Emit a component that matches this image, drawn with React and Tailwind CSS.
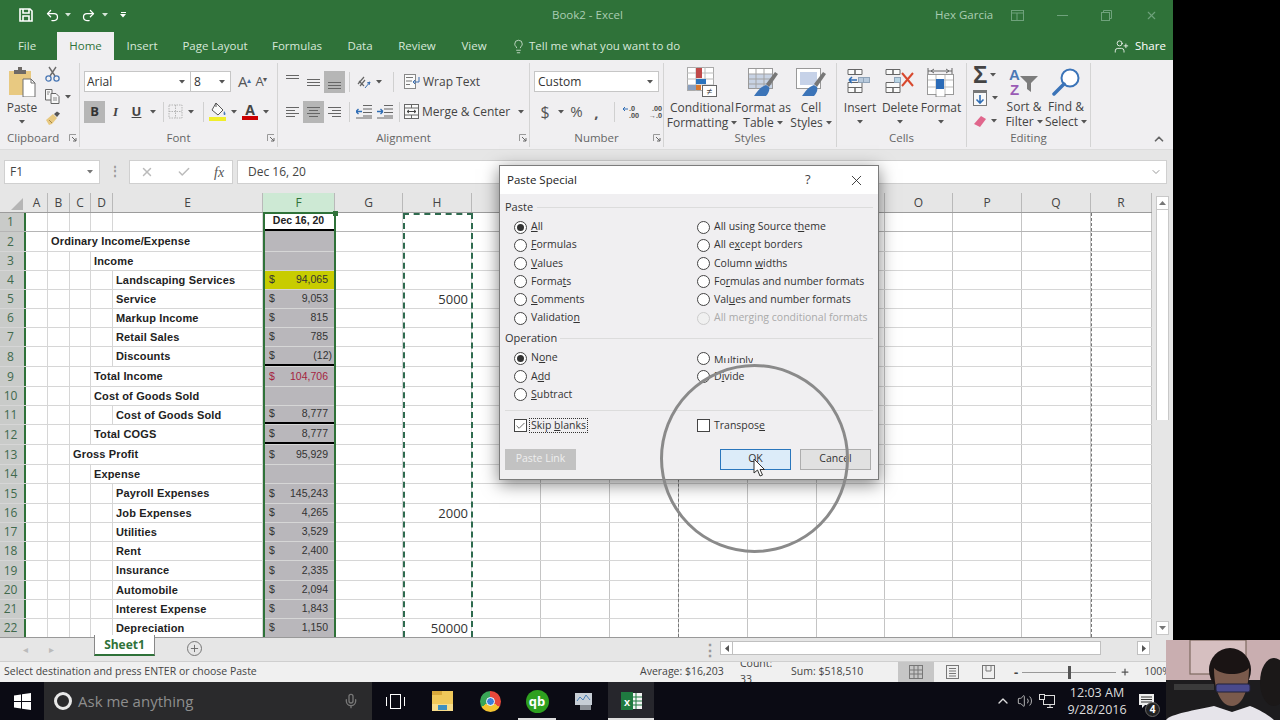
import React from "react";
import { Mic, ChevronUp, Undo2, Redo2, Lightbulb, UserPlus, X, Check, Plus, ChevronDown, Volume2 } from "lucide-react";

const Caret = ({ c = "#555" }) => (
  <svg width="6" height="4" viewBox="0 0 6 4" className="shrink-0"><polygon points="0,0 6,0 3,3.5" fill={c} /></svg>
);
const Launcher = () => (
  <svg width="8" height="8" viewBox="0 0 8 8" className="absolute right-[2px] top-[5px]"><path d="M0.5 7V0.5H7" stroke="#999" fill="none" /><path d="M3 3L7 7M7 4V7H4" stroke="#666" fill="none" /></svg>
);
const Sep = () => <div className="w-px h-[20px] bg-[#d0d0d0] shrink-0" />;

const Lines = ({ rows, c = "#666" }) => (
  <svg width="15" height="14" viewBox="0 0 15 14">
    {rows.map(([x, y, w], i) => <rect key={i} x={x} y={y} width={w} height="1" fill={c} />)}
  </svg>
);

const IconPaste = () => (
  <svg width="30" height="30" viewBox="0 0 30 30">
    <rect x="1" y="4" width="22" height="24" fill="#e8c981" />
    <rect x="6" y="3" width="12" height="4" fill="#6e6a66" /><rect x="10" y="0" width="4" height="4" fill="#6e6a66" />
    <path d="M15 12H23L27 16V30H15Z" fill="#fff" stroke="#6e6e6e" />
    <path d="M23 12V16H27" fill="none" stroke="#6e6e6e" />
  </svg>
);
const IconCut = () => (
  <svg width="15" height="16" viewBox="0 0 15 16">
    <path d="M4 1L10 10M11 1L5 10" stroke="#6b6b6b" strokeWidth="1.4" />
    <circle cx="3.5" cy="12.5" r="2.6" fill="none" stroke="#4a78b5" strokeWidth="1.3" />
    <circle cx="11.5" cy="12.5" r="2.6" fill="none" stroke="#4a78b5" strokeWidth="1.3" />
  </svg>
);
const IconCopy = () => (
  <svg width="15" height="15" viewBox="0 0 15 15" fill="#f7f7f7" stroke="#666">
    <path d="M0.5 0.5H7V11H0.5Z" /><path d="M6 4.5H11L14 7.5V14.5H6Z" />
    <path d="M2 3H5M2 5H4M8 9H12M8 11H12" stroke="#888" />
  </svg>
);
const IconBrush = () => (
  <svg width="16" height="15" viewBox="0 0 16 15">
    <path d="M9 3L12 0.5L15 2.5L12 6Z" fill="#555" />
    <path d="M8 3L12 7L7 13L4 14L1 9Z" fill="#e8c981" />
    <path d="M4 9L7 12" stroke="#a5874a" />
  </svg>
);
const IconBorders = () => (
  <svg width="15" height="15" viewBox="0 0 15 15" fill="none" stroke="#b5b5b5" strokeDasharray="1.5 1">
    <rect x="1" y="1" width="13" height="13" /><path d="M7.5 1V14M1 7.5H14" />
  </svg>
);
const IconFill = () => (
  <svg width="18" height="20" viewBox="0 0 18 20">
    <path d="M7 1L14 8L9 13L3 8Z" fill="#fafafa" stroke="#555" />
    <path d="M7 1V5" stroke="#555" /><path d="M15 9C16.5 11 17 12 16 13C15 13.5 14 12.5 15 9Z" fill="#4a78b5" />
    <rect x="0" y="15" width="17" height="4" fill="#f0ee2a" />
  </svg>
);
const IconOrient = () => (
  <svg width="16" height="16" viewBox="0 0 16 16">
    <path d="M2 10L8 3M4 12L9 6M3 7L8 12" stroke="#666" strokeWidth="1.2" /><path d="M9 14L14 8M14 8L11 9M14 8L13 11" stroke="#3c6fb0" fill="none" />
  </svg>
);
const IconWrap = () => (
  <svg width="16" height="15" viewBox="0 0 16 15" fill="none">
    <rect x="0.5" y="0.5" width="11" height="14" stroke="#888" fill="#fafafa" />
    <path d="M2 3.5H9M2 7H8M2 10.5H6" stroke="#777" /><path d="M9 8H15M15 3V8M11 6L9 8L11 10" stroke="#3c6fb0" />
  </svg>
);
const IconMerge = () => (
  <svg width="15" height="15" viewBox="0 0 15 15" fill="#fafafa">
    <rect x="0.5" y="0.5" width="14" height="14" stroke="#666" /><path d="M0.5 4H14.5M0.5 11H14.5M7.5 0.5V4M7.5 11V14.5" stroke="#666" />
    <path d="M3 7.5H12M3 7.5L5 6M3 7.5L5 9M12 7.5L10 6M12 7.5L10 9" stroke="#444" fill="none" />
  </svg>
);
const IconIndent = ({ flip }) => (
  <svg width="16" height="14" viewBox="0 0 16 14" className={flip ? "" : ""}>
    <path d="M7 1H16M7 4.5H16M7 8H16M7 11.5H16M0 13.5H16" stroke="#666" transform="translate(0 -0.5)" />
    {flip ? <path d="M0 6.5H6M6 6.5L3.5 4M6 6.5L3.5 9" stroke="#2f6db5" strokeWidth="1.3" fill="none" /> : <path d="M0 6.5H6M0 6.5L2.5 4M0 6.5L2.5 9" stroke="#2f6db5" strokeWidth="1.3" fill="none" />}
  </svg>
);
const IconCond = () => (
  <svg width="31" height="30" viewBox="0 0 31 30">
    <rect x="0.5" y="0.5" width="26" height="23" fill="#fff" stroke="#aaa" />
    <path d="M9 0V24M18 0V24M0 6H27M0 12H27M0 18H27" stroke="#bbb" />
    <rect x="9" y="1" width="6" height="5" fill="#c04a4a" /><rect x="9" y="6" width="6" height="5" fill="#c04a4a" />
    <rect x="9" y="12" width="10" height="5" fill="#2c74bd" /><rect x="9" y="18" width="5" height="5" fill="#d9772d" /><rect x="1" y="18" width="8" height="5" fill="#8aa0bf" />
    <rect x="15.5" y="18.5" width="14" height="11" fill="#fff" stroke="#666" />
    <text x="22.5" y="27.5" fontSize="10" textAnchor="middle" fill="#444" fontFamily="Liberation Sans">≠</text>
  </svg>
);
const IconTable = ({ cell }) => (
  <svg width="30" height="30" viewBox="0 0 30 30">
    <rect x="0.5" y="1.5" width="24" height="20" fill="#fff" stroke="#999" />
    {cell ? <rect x="4" y="5" width="17" height="13" fill="#c6d2e8" /> : <><rect x="1" y="7" width="23" height="14" fill="#c8d3e4" /><path d="M8 2V22M16 2V22M1 7H24M1 12H24M1 17H24" stroke="#a3a3a3" /></>}
    <path d="M18 17L27 5L30 7L21 20Z" fill="#777" />
    <path d="M18 18C12 20 9 25 6 29H18C21 26 22 22 21 20Z" fill="#3b74b8" />
  </svg>
);
const IconInsert = () => (
  <svg width="26" height="30" viewBox="0 0 26 30" fill="#fafafa" stroke="#666">
    <path d="M1 2.5H8V7.5H1ZM8 2.5H15V7.5H8Z" /><path d="M1 20.5H8V25.5H1ZM8 20.5H15V25.5H8ZM1 15.5H15V20.5H1Z" />
    <rect x="11.5" y="10.5" width="5" height="5" fill="#b7c9dc" stroke="#8fa3b8" /><rect x="16.5" y="10.5" width="6" height="5" fill="#b7c9dc" stroke="#8fa3b8" />
    <path d="M2 13H10M2 13L5 10M2 13L5 16" stroke="#2f6db5" strokeWidth="1.5" fill="none" />
  </svg>
);
const IconDelete = () => (
  <svg width="30" height="30" viewBox="0 0 30 30" fill="#fafafa" stroke="#666">
    <path d="M1 2.5H8V7.5H1ZM8 2.5H15V7.5H8Z" /><path d="M1 20.5H8V25.5H1ZM8 20.5H15V25.5H8ZM1 15.5H15V20.5H1Z" />
    <rect x="9.5" y="10.5" width="6" height="5" fill="#b7d4e4" stroke="#8fa3b8" />
    <path d="M17 6L28 19M28 6L17 19" stroke="#d8492f" strokeWidth="2" />
  </svg>
);
const IconFormat = () => (
  <svg width="28" height="30" viewBox="0 0 28 30">
    <path d="M1 4H25M1 1V7M25 1V7" stroke="#666" fill="none" /><path d="M4 4L7 2M4 4L7 6M22 4L19 2M22 4L19 6" stroke="#666" fill="none" />
    <rect x="0.5" y="7.5" width="26" height="20" fill="#fff" stroke="#999" />
    <path d="M9 8V27M18 8V27M1 13H26M1 20H26" stroke="#bbb" />
    <rect x="9" y="12" width="8" height="10" fill="#2c6cb8" />
    <path d="M9 27V30H18V27" fill="#fff" stroke="#888" />
  </svg>
);
const IconSort = () => (
  <svg width="31" height="28" viewBox="0 0 31 28">
    <text x="0" y="12" fontSize="15" fontWeight="700" fill="#4a78b5" fontFamily="Liberation Sans">A</text>
    <text x="1" y="27" fontSize="15" fontWeight="700" fill="#9a5bb5" fontFamily="Liberation Sans">Z</text>
    <path d="M11 8H29L22 15V24L18 21V15Z" fill="#7c7c7c" />
  </svg>
);
const IconFind = () => (
  <svg width="28" height="28" viewBox="0 0 28 28">
    <circle cx="18" cy="10" r="8.5" fill="#fff" stroke="#3b74b8" strokeWidth="2" />
    <path d="M12 16L2 26" stroke="#3b74b8" strokeWidth="3.5" strokeLinecap="round" />
  </svg>
);
const IconFillDown = () => (
  <svg width="15" height="16" viewBox="0 0 15 16">
    <rect x="0.5" y="0.5" width="13" height="15" fill="#f8f8f8" stroke="#777" /><rect x="0" y="0" width="14" height="3" fill="#777" />
    <path d="M7 5V13M3.5 9.5L7 13L10.5 9.5" stroke="#2f6db5" strokeWidth="1.6" fill="none" />
  </svg>
);
const IconEraser = () => (
  <svg width="14" height="13" viewBox="0 0 14 13"><path d="M8 1L13 4L7 12L1 9Z" fill="#e0668c" /></svg>
);

const Large = ({ icon, l1, l2, arrow, w }) => (
  <div className={`${w} flex flex-col items-center pt-[7px] shrink-0`}>
    <div className="h-[30px] flex items-end justify-center">{icon}</div>
    <div className="mt-[3px] leading-[15px] whitespace-nowrap">{l1}</div>
    <div className="leading-[15px] h-[15px] whitespace-nowrap flex items-center gap-[3px]">{l2}{arrow && <Caret />}</div>
  </div>
);

const Group = ({ w, label, launcher, children, labelClass = "justify-center" }) => (
  <div className={`${w} h-[90px] shrink-0 flex flex-col border-r border-[#d4d4d4] text-[12px] text-[#444] mt-[3px] !h-[84px]`}>
    <div className="h-[69px] flex -mt-[3px]">{children}</div>
    <div className={`relative h-[18px] flex items-center ${labelClass} text-[11.5px] text-[#666]`}>
      {label}{launcher && <Launcher />}
    </div>
  </div>
);

const Ribbon = () => (
  <div className="h-[90px] bg-[#f0eff1] flex shrink-0 relative border-b border-[#dcdcdc]">
    <Group w="w-[80px]" label={<span className="absolute left-[7px]">Clipboard</span>} launcher>
      <div className="w-[44px] flex flex-col items-center pt-[7px]">
        <div className="pl-[2px]"><IconPaste /></div>
        <div className="mt-[3px] leading-[15px]">Paste</div>
        <div className="h-[15px] flex items-center"><Caret /></div>
      </div>
      <div className="flex flex-col pt-[6px] pl-[1px] gap-[7px]">
        <IconCut />
        <div className="flex items-center gap-[5px]"><IconCopy /><Caret /></div>
        <IconBrush />
      </div>
    </Group>
    <Group w="w-[198px]" label="Font" launcher>
      <div className="flex flex-col pl-[4px] pt-[11px] w-full">
        <div className="flex items-center h-[21px]">
          <div className="w-[107px] h-[21px] bg-white border border-[#c6c6c6] flex items-center justify-between pl-[2px] pr-[5px] text-[#333]">Arial<Caret /></div>
          <div className="w-[40px] h-[21px] bg-white border border-l-0 border-[#c6c6c6] flex items-center justify-between pl-[3px] pr-[5px] text-[#333]">8<Caret /></div>
          <span className="ml-[7px] text-[15px] text-[#555] leading-none">A<sup className="text-[#3c6fb0] text-[8px] -ml-[1px]">▴</sup></span>
          <span className="ml-[5px] text-[13px] text-[#555] leading-none">A<sup className="text-[#555] text-[8px] -ml-[1px]">▾</sup></span>
        </div>
        <div className="flex items-center h-[21px] mt-[9px]">
          <div className="w-[21px] h-[22px] bg-[#b6b6b6] flex items-center justify-center font-bold text-[13px] text-[#333]">B</div>
          <div className="w-[21px] text-center italic font-bold text-[13px] font-['Liberation_Serif',serif] text-[#444]">I</div>
          <div className="w-[21px] text-center underline font-bold text-[13px] text-[#444]">U</div>
          <div className="w-[11px] flex justify-center"><Caret /></div>
          <div className="w-[10px] flex justify-center"><Sep /></div>
          <IconBorders />
          <div className="w-[15px] flex justify-center"><Caret /></div>
          <div className="w-[11px] flex justify-center"><Sep /></div>
          <IconFill />
          <div className="w-[13px] flex justify-center"><Caret /></div>
          <div className="w-[20px] flex flex-col items-center text-[#444]">
            <span className="text-[14px] leading-[13px] font-bold">A</span><div className="w-[16px] h-[4px] bg-[#c00]" />
          </div>
          <div className="w-[12px] flex justify-center"><Caret /></div>
        </div>
      </div>
    </Group>
    <Group w="w-[252px]" label="Alignment" launcher>
      <div className="flex flex-col pl-[4px] pt-[11px] w-full">
        <div className="flex items-center h-[21px]">
          <div className="w-[21px] flex justify-center -mt-[4px]"><Lines rows={[[1, 2, 13], [1, 5, 13]]} /></div>
          <div className="w-[21px] flex justify-center"><Lines rows={[[1, 4, 13], [1, 7, 13], [1, 10, 13]]} /></div>
          <div className="w-[21px] h-[22px] bg-[#b6b6b6] flex items-center justify-center"><Lines rows={[[1, 7, 13], [1, 10, 13], [1, 13, 13]]} /></div>
          <div className="w-[8px] flex justify-center"><Sep /></div>
          <div className="w-[21px] flex justify-center"><IconOrient /></div>
          <div className="w-[9px] flex justify-center"><Caret /></div>
          <div className="w-[21px] flex justify-center"><Sep /></div>
          <IconWrap />
          <span className="ml-[3px]">Wrap Text</span>
        </div>
        <div className="flex items-center h-[21px] mt-[9px]">
          <div className="w-[21px] flex justify-center"><Lines rows={[[1, 2, 13], [1, 5, 9], [1, 8, 13], [1, 11, 9]]} /></div>
          <div className="w-[21px] h-[22px] bg-[#b6b6b6] flex items-center justify-center"><Lines rows={[[1, 2, 13], [3, 5, 9], [1, 8, 13], [3, 11, 9]]} /></div>
          <div className="w-[21px] flex justify-center"><Lines rows={[[1, 2, 13], [5, 5, 9], [1, 8, 13], [5, 11, 9]]} /></div>
          <div className="w-[8px] flex justify-center"><Sep /></div>
          <div className="w-[21px] flex justify-center"><IconIndent /></div>
          <div className="w-[21px] flex justify-center"><IconIndent flip /></div>
          <div className="w-[9px] flex justify-center"><Sep /></div>
          <IconMerge />
          <span className="ml-[3px]">Merge &amp; Center</span>
          <div className="ml-[8px]"><Caret /></div>
        </div>
      </div>
    </Group>
    <Group w="w-[134px]" label="Number" launcher>
      <div className="flex flex-col pl-[4px] pt-[11px] w-full">
        <div className="w-[125px] h-[21px] bg-white border border-[#c6c6c6] flex items-center justify-between pl-[3px] pr-[5px] text-[#333]">Custom<Caret /></div>
        <div className="flex items-center h-[21px] mt-[9px]">
          <div className="w-[22px] text-center text-[16px] text-[#555]">$</div>
          <div className="w-[9px] flex justify-center"><Caret /></div>
          <div className="w-[21px] ml-[1px] text-center text-[15px] text-[#555]">%</div>
          <div className="w-[19px] text-center font-bold text-[15px] text-[#555] leading-[14px]">,</div>
          <div className="w-[17px] flex justify-center"><Sep /></div>
          <svg width="14" height="14" viewBox="0 0 14 14"><path d="M0 4H5M0 4L2 2M0 4L2 6" stroke="#2f6db5" fill="none" /></svg>
          <span className="-ml-[8px] w-[14px] text-[7px] leading-[7px] font-bold text-[#555]">.0<br />.00</span>
          <span className="w-[14px] ml-[5px] text-[7px] leading-[7px] font-bold text-[#555] text-right">.00<br />→.0</span>
        </div>
      </div>
    </Group>
    <Group w="w-[173px]" label="Styles">
      <Large w="w-[76px]" icon={<IconCond />} l1="Conditional" l2="Formatting" arrow />
      <Large w="w-[46px]" icon={<IconTable />} l1="Format as" l2="Table" arrow />
      <Large w="w-[50px]" icon={<IconTable cell />} l1="Cell" l2="Styles" arrow />
    </Group>
    <Group w="w-[130px]" label="Cells">
      <Large w="w-[46px]" icon={<IconInsert />} l1="Insert" l2="" arrow />
      <Large w="w-[34px]" icon={<IconDelete />} l1="Delete" l2="" arrow />
      <Large w="w-[48px]" icon={<IconFormat />} l1="Format" l2="" arrow />
    </Group>
    <Group w="w-[124px]" label="Editing">
      <div className="w-[37px] flex flex-col pt-[5px] pl-[6px] gap-[4px]">
        <div className="h-[20px] flex items-center gap-[3px]"><span className="text-[24px] leading-[20px] font-bold text-[#444] font-['Liberation_Sans',sans-serif]">Σ</span><Caret /></div>
        <div className="h-[16px] flex items-center gap-[4px] mt-[1px]"><IconFillDown /><Caret /></div>
        <div className="h-[16px] flex items-center gap-[4px] mt-[3px]"><IconEraser /><Caret /></div>
      </div>
      <Large w="w-[40px]" icon={<IconSort />} l1="Sort &" l2="Filter" arrow />
      <Large w="w-[44px]" icon={<IconFind />} l1="Find &" l2="Select" arrow />
    </Group>
    <div className="flex-1 flex items-end justify-end pr-[7px] pb-[3px]"><ChevronUp size={14} strokeWidth={3} color="#666" /></div>
  </div>
);

const FormulaBar = () => (
  <div className="h-[43px] bg-[#e6e6e6] flex items-start pt-[10px] pl-[4px] shrink-0 text-[12px] text-[#444]">
    <div className="w-[96px] h-[24px] bg-white border border-[#d0d0d0] flex items-center justify-between pl-[5px] pr-[6px]">F1<Caret c="#777" /></div>
    <div className="w-[29px] flex justify-center text-[#999] font-bold leading-[22px]">⋮</div>
    <div className="w-[104px] h-[24px] bg-white border border-[#d0d0d0] flex items-center pl-[10px] gap-[23px]">
      <X size={14} color="#bbb" strokeWidth={2.5} /><Check size={14} color="#bbb" strokeWidth={2.5} />
      <span className="italic font-['Liberation_Serif',serif] text-[14px] text-[#555]">fx</span>
    </div>
    <div className="ml-[4px] w-[930px] h-[24px] bg-white border border-[#d0d0d0] flex items-center justify-between pl-[10px] pr-[4px]">Dec 16, 20<ChevronDown size={12} color="#999" /></div>
  </div>
);

const COLS = [
  ["A", "w-[22px]"], ["B", "w-[22px]"], ["C", "w-[21px]"], ["D", "w-[22px]"], ["E", "w-[150px]"], ["F", "w-[72px]"],
  ["G", "w-[68px]"], ["H", "w-[69px]"], ["I", "w-[69px]"], ["J", "w-[69px]"], ["K", "w-[69px]"], ["L", "w-[69px]"],
  ["M", "w-[69px]"], ["N", "w-[68px]"], ["O", "w-[68px]"], ["P", "w-[69px]"], ["Q", "w-[69px]"], ["R", "w-[61px]"],
];
const LEFT = { A: "w-[22px]", B: "w-[22px]", C: "w-[21px]", D: "w-[22px]" };
const MERGE = { B: "w-[215px]", C: "w-[193px]", D: "w-[172px]", E: "w-[150px]" };

const ROWS = [
  { h: 19, date: true },
  { h: 20, s: "B", t: "Ordinary Income/Expense" },
  { h: 19, s: "D", t: "Income" },
  { h: 19, s: "E", t: "Landscaping Services", v: "94,065", y: true },
  { h: 19, s: "E", t: "Service", v: "9,053", hv: "5000" },
  { h: 19, s: "E", t: "Markup Income", v: "815" },
  { h: 19, s: "E", t: "Retail Sales", v: "785" },
  { h: 20, s: "E", t: "Discounts", v: "(12)", line: true, neg: true },
  { h: 20, s: "D", t: "Total Income", v: "104,706", red: true },
  { h: 19, s: "D", t: "Cost of Goods Sold" },
  { h: 19, s: "E", t: "Cost of Goods Sold", v: "8,777", line: true },
  { h: 20, s: "D", t: "Total COGS", v: "8,777", line: true },
  { h: 20, s: "C", t: "Gross Profit", v: "95,929" },
  { h: 19, s: "D", t: "Expense" },
  { h: 20, s: "E", t: "Payroll Expenses", v: "145,243" },
  { h: 19, s: "E", t: "Job Expenses", v: "4,265", hv: "2000" },
  { h: 19, s: "E", t: "Utilities", v: "3,529" },
  { h: 19, s: "E", t: "Rent", v: "2,400" },
  { h: 20, s: "E", t: "Insurance", v: "2,335" },
  { h: 19, s: "E", t: "Automobile", v: "2,094" },
  { h: 19, s: "E", t: "Interest Expense", v: "1,843" },
  { h: 19, s: "E", t: "Depreciation", v: "1,150", hv: "50000" },
];

const Row = ({ r, n }) => {
  const order = ["A", "B", "C", "D"];
  const start = r.s || "A";
  const before = r.s ? order.slice(0, order.indexOf(start === "E" ? "D" : start) + (start === "E" ? 1 : 0)) : order;
  const rowH = r.h === 20 ? "h-[20px]" : "h-[19px]";
  const fBg = r.date ? "bg-white" : r.y ? "bg-[#c8cc00]" : "bg-[#b9b7bb]";
  const col = r.red ? "text-[#a51f3f]" : "text-[#333]";
  return (
    <div className={`flex ${rowH} border-b ${r.date ? "border-[#b5b5b5]" : "border-[#d6d6d6]"} box-border overflow-hidden`}>
      <div className="w-[26px] shrink-0 bg-[#c9cbc9] border-r-2 border-[#2f7239] text-[#40694c] text-[12px] flex items-center justify-center pr-[3px]">{n}</div>
      {before.map((c) => <div key={c} className={`${LEFT[c]} shrink-0 border-r border-[#d6d6d6]`} />)}
      {r.s ? (
        <div className={`${MERGE[r.s]} shrink-0 border-r border-[#d6d6d6] flex items-center pl-[3px] font-['Liberation_Sans',sans-serif] font-bold text-[11px] tracking-[0.15px] text-[#222] whitespace-nowrap`}>{r.t}</div>
      ) : <div className="w-[150px] shrink-0 border-r border-[#d6d6d6]" />}
      <div className={`w-[72px] shrink-0 ${fBg} ${r.date || r.line ? "border-b-2 border-black" : ""} flex items-center justify-between pl-[6px] pr-[7px] font-['Liberation_Sans',sans-serif] text-[10.5px] ${col}`}>
        {r.date ? <span className="w-full text-center font-bold text-[10.5px] text-[#222]">Dec 16, 20</span> : r.v ? <><span>$</span><span className={r.neg ? "-mr-[4px]" : ""}>{r.v}</span></> : null}
      </div>
      <div className="w-[68px] shrink-0 border-r border-[#d6d6d6]" />
      <div className="w-[69px] shrink-0 border-r border-[#d6d6d6] text-right pr-[3px] text-[13px] text-[#333] leading-[18px]">{r.hv}</div>
      {COLS.slice(8).map(([c, w]) => <div key={c} className={`${w} shrink-0 border-r border-[#c4c4c4]`} />)}
    </div>
  );
};

const Sheet = () => (
  <div className="flex h-[445px] shrink-0 bg-white">
    <div className="w-[1152px] relative shrink-0 overflow-hidden border-b border-[#999]">
      <div className="flex h-[20px] bg-[#e6e6e6] border-b border-[#9c9c9c] text-[12px] text-[#444]">
        <div className="w-[26px] shrink-0 flex items-end justify-end pr-[3px] pb-[2px]"><svg width="12" height="12" viewBox="0 0 12 12"><polygon points="12,0 12,12 0,12" fill="#b5b5b5" /></svg></div>
        {COLS.map(([c, w]) => (
          <div key={c} className={`${w} shrink-0 flex items-center justify-center border-r border-[#b9b9b9] ${c === "F" ? "bg-[#cde9d4] text-[#2f7239]" : ""}`}>{c}</div>
        ))}
      </div>
      {ROWS.map((r, i) => <Row key={i} r={r} n={i + 1} />)}
      <div className="absolute left-[263px] top-[19px] bottom-0 w-[73px] border-2 border-b-0 border-[#2f7239]" />
      <div className="absolute left-[333px] top-[18px] w-[5px] h-[5px] bg-[#2f7239]" />
      <div className="absolute left-[403px] top-[20px] bottom-0 w-[70px] border-2 border-b-0 border-dashed border-[#2f6b4f]" />
      <div className="absolute left-[678px] top-[20px] bottom-0 w-0 border-l border-dashed border-[#777]" />
      <div className="absolute left-[1091px] top-[20px] bottom-0 w-0 border-l border-dashed border-[#777]" />
    </div>
    <div className="w-[21px] shrink-0 bg-[#e6e6e6] pl-[4px] pr-[4px] pt-[3px] flex flex-col items-stretch">
      <div className="h-[14px] bg-white border border-[#c8c8c8] flex items-center justify-center"><svg width="7" height="4" viewBox="0 0 7 4"><polygon points="0,4 7,4 3.5,0" fill="#777" /></svg></div>
      <div className="h-[210px] bg-white border-x border-[#c8c8c8]" />
      <div className="flex-1" />
      <div className="h-[14px] mb-[3px] bg-white border border-[#c8c8c8] flex items-center justify-center"><svg width="7" height="4" viewBox="0 0 7 4"><polygon points="0,0 7,0 3.5,4" fill="#777" /></svg></div>
    </div>
  </div>
);

const SheetBar = () => (
  <div className="h-[24px] bg-[#e6e6e6] flex shrink-0 border-b border-[#cfcfcf] text-[#aaa] relative">
    <div className="w-[94px] flex items-center pl-[23px] gap-[21px] text-[10px] text-[#bbb]"><span>◂</span><span>▸</span></div>
    <div className="w-[61px] h-[21px] bg-white border-x border-b-2 border-[#888] border-b-[#2f7239] -mt-[3px] flex items-center justify-center text-[12px] font-bold text-[#2f7239]">Sheet1</div>
    <div className="ml-[32px] w-[15px] h-[15px] mt-[3px] rounded-full border border-[#777] flex items-center justify-center"><Plus size={11} color="#666" /></div>
    <div className="ml-[500px] text-[#999] font-bold">⋮</div>
    <div className="absolute left-[720px] top-[3px] w-[430px] h-[14px] flex">
      <div className="w-[13px] bg-white border border-[#c0c0c0] flex items-center justify-center"><svg width="4" height="7" viewBox="0 0 4 7"><polygon points="4,0 4,7 0,3.5" fill="#555" /></svg></div>
      <div className="w-[368px] bg-white border-y border-r border-[#c0c0c0]" />
      <div className="w-[36px]" />
      <div className="w-[13px] bg-white border border-[#c0c0c0] flex items-center justify-center"><svg width="4" height="7" viewBox="0 0 4 7"><polygon points="0,0 0,7 4,3.5" fill="#555" /></svg></div>
    </div>
  </div>
);

const StatusBar = () => (
  <div className="h-[20px] bg-[#f0f0f0] flex items-center shrink-0 text-[10.5px] text-[#444] pl-[4px]">
    <span className="w-[636px]">Select destination and press ENTER or choose Paste</span>
    <span className="w-[100px]">Average: $16,203</span>
    <span className="w-[47px]">Count: 33</span>
    <span className="w-[111px] pl-[4px]">Sum: $518,510</span>
    <div className="w-[36px] h-[20px] bg-[#c6c6c6] flex items-center justify-center">
      <svg width="14" height="14" viewBox="0 0 14 14" fill="none" stroke="#777"><rect x="0.5" y="0.5" width="13" height="13" /><path d="M5 0V14M9 0V14M0 5H14M0 9H14" /></svg>
    </div>
    <div className="w-[36px] flex justify-center"><svg width="13" height="14" viewBox="0 0 13 14" fill="none" stroke="#777"><rect x="0.5" y="0.5" width="12" height="13" /><path d="M3 3.5H10M3 6H10M3 8.5H10M3 11H10" /></svg></div>
    <div className="w-[37px] flex justify-center"><svg width="13" height="14" viewBox="0 0 13 14" fill="none" stroke="#777"><rect x="0.5" y="0.5" width="12" height="13" /><path d="M4 0.5V6H9V0.5" /></svg></div>
    <span className="ml-[7px] font-bold text-[13px] leading-none">-</span>
    <div className="ml-[4px] w-[94px] h-px bg-[#999] relative"><div className="absolute left-[46px] -top-[6px] w-[3px] h-[13px] bg-[#555]" /></div>
    <Plus size={10} strokeWidth={3} color="#555" className="ml-[4px]" />
    <span className="ml-[14px]">100%</span>
  </div>
);

const Radio = ({ on, off, label, cls = "" }) => (
  <div className={`h-[18.2px] flex items-center ${cls}`}>
    <span className={`w-[13px] h-[13px] rounded-full border ${off ? "border-[#ccc] bg-[#f0f0f0]" : "border-[#444] bg-white"} flex items-center justify-center shrink-0`}>
      {on && <span className="w-[7px] h-[7px] rounded-full bg-[#333]" />}
    </span>
    <span className={`ml-[4px] whitespace-nowrap ${off ? "text-[#aaa]" : ""}`}>{label}</span>
  </div>
);

const Heading = ({ t, w }) => (
  <div className="flex items-center h-[14px] text-[11px]">
    <span className={w}>{t}</span>
    <div className="flex-1 h-px bg-[#dcdcdc]" />
  </div>
);

const Dialog = () => (
  <div className="absolute left-[499px] top-[165px] w-[380px] h-[315px] border border-[#7c7c7c] bg-[#f0eff1] text-[#333] text-[10.5px] shadow-[0_4px_16px_rgba(0,0,0,0.5)] flex flex-col font-['Open_Sans',sans-serif]">
    <div className="h-[28px] bg-white flex items-center pl-[7px] shrink-0 text-[11.5px] text-[#222]">
      <span className="flex-1">Paste Special</span>
      <span className="text-[13px] w-[43px] text-[#444]">?</span>
      <X size={17} strokeWidth={1.2} color="#222" className="mr-[13px]" />
    </div>
    <div className="flex-1 pl-[5px] pr-[5px] pt-[6px] flex flex-col">
      <Heading t="Paste" w="w-[32px]" />
      <div className="flex pl-[9px] mt-[4px]">
        <div className="w-[183px]">
          <Radio on label={<><u>A</u>ll</>} />
          <Radio label={<><u>F</u>ormulas</>} />
          <Radio label={<><u>V</u>alues</>} />
          <Radio label={<>Forma<u>t</u>s</>} />
          <Radio label={<><u>C</u>omments</>} />
          <Radio label={<>Validatio<u>n</u></>} />
        </div>
        <div>
          <Radio label={<>All using Source t<u>h</u>eme</>} />
          <Radio label={<>All e<u>x</u>cept borders</>} />
          <Radio label={<>Column <u>w</u>idths</>} />
          <Radio label={<>Fo<u>r</u>mulas and number formats</>} />
          <Radio label={<>Val<u>u</u>es and number formats</>} />
          <Radio off label="All merging conditional formats" />
        </div>
      </div>
      <div className="mt-[4px]"><Heading t="Operation" w="w-[55px]" /></div>
      <div className="flex pl-[9px] mt-[4px]">
        <div className="w-[183px]">
          <Radio on label={<>N<u>o</u>ne</>} />
          <Radio label={<>A<u>d</u>d</>} />
          <Radio label={<><u>S</u>ubtract</>} />
        </div>
        <div>
          <Radio label={<span className="block h-[9px] overflow-hidden leading-[13px]"><u>M</u>ultiply</span>} />
          <Radio label={<>D<u>i</u>vide</>} />
        </div>
      </div>
      <div className="h-px bg-[#dcdcdc] mt-[6px]" />
      <div className="flex pl-[9px] mt-[8px] h-[14px] items-center">
        <div className="w-[183px] flex items-center">
          <span className="w-[13px] h-[13px] border border-[#444] bg-white flex items-center justify-center"><Check size={12} strokeWidth={1.6} color="#333" /></span>
          <span className="ml-[2px] border border-dotted border-[#333] px-[1px] leading-[13px]">Skip <u>b</u>lanks</span>
        </div>
        <span className="w-[13px] h-[13px] border border-[#444] bg-white" />
        <span className="ml-[4px]">Transpos<u>e</u></span>
      </div>
      <div className="flex mt-[16px] items-center">
        <div className="w-[71px] h-[21px] bg-[#c2c2c2] text-[#eee] flex items-center justify-center">Paste Link</div>
        <div className="ml-[144px] w-[71px] h-[21px] bg-[#dcecf9] border border-[#2a77bd] flex items-center justify-center">OK</div>
        <div className="ml-[9px] w-[71px] h-[21px] bg-[#e1e1e1] border border-[#adadad] flex items-center justify-center">Cancel</div>
      </div>
    </div>
  </div>
);

const Webcam = () => (
  <svg width="114" height="80" viewBox="0 0 114 80" className="absolute left-[1166px] top-[640px]">
    <rect width="114" height="80" fill="#c9aeb0" />
    <rect x="24" y="0" width="56" height="34" fill="#d6bfc0" stroke="#7d6a60" strokeWidth="1.2" />
    <rect x="0" y="40" width="114" height="40" fill="#1d1c1e" />
    <rect x="8" y="44" width="40" height="6" fill="#3a3a3a" />
    <ellipse cx="108" cy="42" rx="14" ry="24" fill="#1b1818" />
    <ellipse cx="64" cy="30" rx="21" ry="22" fill="#1a1414" />
    <path d="M48 28C48 48 54 66 66 66C78 66 83 46 83 28C76 36 56 36 48 28Z" fill="#7a5a4c" />
    <rect x="50" y="44" width="34" height="8" rx="2" fill="#4a4a8c" stroke="#20203a" />
    <path d="M0 80C4 74 30 70 48 66L66 72L84 66C94 70 104 76 108 80Z" fill="#e6e4ea" />
  </svg>
);

const Taskbar = () => (
  <div className="h-[38px] w-[1280px] bg-[#0b0b14] flex items-stretch shrink-0 text-[#aaa]">
    <div className="w-[44px] flex items-center justify-center">
      <svg width="17" height="17" viewBox="0 0 17 17" fill="#fff"><path d="M0 2.5L7 1.5V8H0ZM8 1.3L17 0V8H8ZM0 9H7V15.5L0 14.5ZM8 9H17V17L8 15.7Z" /></svg>
    </div>
    <div className="w-[328px] bg-[#2a2a2c] flex items-center pl-[10px] pr-[13px] text-[15px] text-[#8e8e8e] font-['Open_Sans',sans-serif]">
      <span className="w-[18px] h-[18px] rounded-full border-[3px] border-[#e8e8e8] shrink-0" />
      <span className="ml-[6px] flex-1">Ask me anything</span>
      <Mic size={16} color="#777" />
    </div>
    <div className="w-[46px] flex items-center justify-center">
      <svg width="19" height="15" viewBox="0 0 19 15" fill="none" stroke="#fff"><rect x="4.5" y="0.5" width="10" height="14" /><path d="M0.5 3V12M18.5 3V12" /></svg>
    </div>
    <div className="w-[48px] flex items-center justify-center">
      <svg width="21" height="20" viewBox="0 0 21 20"><rect y="0" width="21" height="20" fill="#f0c85a" /><rect y="0" width="10" height="4" fill="#d9a93b" /><rect x="0" y="13" width="21" height="7" fill="#f7dc8a" /><rect x="6" y="14" width="9" height="5" fill="#3f8fc0" /></svg>
    </div>
    <div className="w-[48px] flex items-center justify-center">
      <div className="w-[21px] h-[21px] rounded-full bg-[conic-gradient(#e8483b_0deg_120deg,#f4c430_120deg_240deg,#3aa657_240deg_360deg)] flex items-center justify-center"><span className="w-[9px] h-[9px] rounded-full bg-[#3b7fd9] border border-white" /></div>
    </div>
    <div className="w-[46px] flex items-center justify-center relative">
      <div className="w-[23px] h-[23px] rounded-full bg-[#2ea01f] flex items-center justify-center text-white text-[13px] font-bold leading-none">qb</div>
      <div className="absolute bottom-0 left-[4px] right-[4px] h-[2px] bg-[#ddd]" />
    </div>
    <div className="w-[48px] flex items-center justify-center">
      <svg width="21" height="20" viewBox="0 0 21 20"><rect x="1" y="2" width="17" height="12" fill="#c7ced6" /><path d="M3 10L6 6L9 9L12 4L16 9" stroke="#4a7fb5" fill="none" /><rect x="6" y="14" width="11" height="5" fill="#8a8f96" /></svg>
    </div>
    <div className="w-[46px] bg-[#26262c] flex items-center justify-center relative">
      <svg width="21" height="18" viewBox="0 0 21 18"><rect x="9" y="1" width="12" height="16" fill="#f4f4f4" /><path d="M9 5H21M9 9H21M9 13H21M15 1V17" stroke="#1f7a40" /><rect x="0" y="0" width="12" height="18" fill="#1f7a40" /><text x="6" y="13.5" fontSize="11" fontWeight="700" textAnchor="middle" fill="#fff" fontFamily="Liberation Sans">x</text></svg>
      <div className="absolute bottom-0 left-0 right-0 h-[2px] bg-[#ddd]" />
    </div>
    <div className="w-[341px]" />
    <div className="flex items-center text-[#ddd] w-[68px] gap-[6px]">
      <ChevronUp size={16} color="#ddd" />
      <Volume2 size={16} color="#ccc" strokeWidth={1.3} />
      <svg width="16" height="15" viewBox="0 0 16 15" fill="none" stroke="#ddd"><rect x="4.5" y="1.5" width="11" height="9" /><path d="M8 13.5H14M11 11V13" /><rect x="0.5" y="0.5" width="5" height="5" fill="#0b0b14" /></svg>
    </div>
    <div className="w-[68px] flex flex-col items-center justify-center text-[12.5px] leading-[17px] text-[#ddd]">
      <span>12:03 AM</span><span>9/28/2016</span>
    </div>
    <div className="relative w-[30px] flex items-center justify-center">
      <svg width="15" height="14" viewBox="0 0 15 14" fill="#eee"><path d="M0 0H15V11H6L3 14V11H0Z" /><path d="M2 3H13M2 5.5H13M2 8H13" stroke="#333" /></svg>
      <span className="absolute left-[14px] top-[20px] w-[15px] h-[15px] rounded-full bg-[#222] border border-[#666] text-white text-[10px] font-bold flex items-center justify-center">4</span>
    </div>
  </div>
);

export default function App() {
  return (
    <div className="relative w-[1280px] h-[720px] bg-black overflow-hidden flex flex-col font-['Open_Sans',sans-serif]">
      <div className="w-[1173px] h-[682px] flex flex-col shrink-0 overflow-hidden">
        <div className="h-[30px] bg-[#2f7239] flex items-center text-[#aacdb2] text-[11.5px] shrink-0 pl-[19px] relative">
          <svg width="14" height="14" viewBox="0 0 14 14" fill="none" stroke="#fff" strokeWidth="1.6"><path d="M1 1H11L13 3V13H1Z" /><path d="M4 1V5H10V1M4 13V8H10V13" /></svg>
          <Undo2 size={15} color="#fff" strokeWidth={2} className="ml-[12px]" />
          <div className="ml-[5px]"><Caret c="#d5e5d8" /></div>
          <Redo2 size={15} color="#fff" strokeWidth={2} className="ml-[10px]" />
          <div className="ml-[6px]"><Caret c="#d5e5d8" /></div>
          <div className="ml-[12px] flex flex-col items-center gap-[1px]"><div className="w-[5px] h-px bg-white" /><Caret c="#fff" /></div>
          <span className="ml-[426px] w-[383px]">Book2 - Excel</span>
          <span className="w-[76px]">Hex Garcia</span>
          <svg width="13" height="11" viewBox="0 0 13 11" fill="none" stroke="#6fa27c"><rect x="0.5" y="0.5" width="12" height="10" /><path d="M0 3H13M6 3V11" /></svg>
          <div className="ml-[33px] w-[11px] h-px bg-[#6fa27c]" />
          <svg width="11" height="11" viewBox="0 0 11 11" fill="none" stroke="#6fa27c" className="ml-[33px]"><rect x="0.5" y="2.5" width="8" height="8" /><path d="M2.5 2.5V0.5H10.5V8.5H8.5" /></svg>
          <X size={13} color="#6fa27c" className="ml-[33px]" />
        </div>
        <div className="h-[30px] bg-[#2f7239] flex items-end text-[11.5px] text-[#d7e8da] shrink-0">
          <div className="w-[54px] h-[28px] flex items-center justify-center">File</div>
          <div className="ml-[3px] w-[57px] h-[28px] bg-[#f0eff1] flex items-center justify-center text-[#2f7239]">Home</div>
          <div className="w-[56px] h-[28px] flex items-center justify-center">Insert</div>
          <div className="w-[90px] h-[28px] flex items-center justify-center">Page Layout</div>
          <div className="w-[74px] h-[28px] flex items-center justify-center">Formulas</div>
          <div className="w-[52px] h-[28px] flex items-center justify-center">Data</div>
          <div className="w-[62px] h-[28px] flex items-center justify-center">Review</div>
          <div className="w-[52px] h-[28px] flex items-center justify-center">View</div>
          <div className="ml-[11px] h-[28px] flex items-center gap-[3px] w-[603px]"><Lightbulb size={15} strokeWidth={1.3} />Tell me what you want to do</div>
          <div className="h-[28px] flex items-center gap-[6px]"><UserPlus size={15} strokeWidth={1.3} color="#fff" /><span className="text-white">Share</span></div>
        </div>
        <Ribbon />
        <FormulaBar />
        <Sheet />
        <SheetBar />
        <StatusBar />
      </div>
      <Taskbar />
      <Dialog />
      <div className="absolute left-[660px] top-[364px] w-[189px] h-[189px] rounded-full border-[3px] border-[#8a8a8a]" />
      <svg width="14" height="20" viewBox="0 0 14 20" className="absolute left-[753px] top-[458px]"><path d="M1 1V15L4.5 12L7 18L9.5 17L7 11.5H11.5Z" fill="#fff" stroke="#333" /></svg>
      <Webcam />
    </div>
  );
}
